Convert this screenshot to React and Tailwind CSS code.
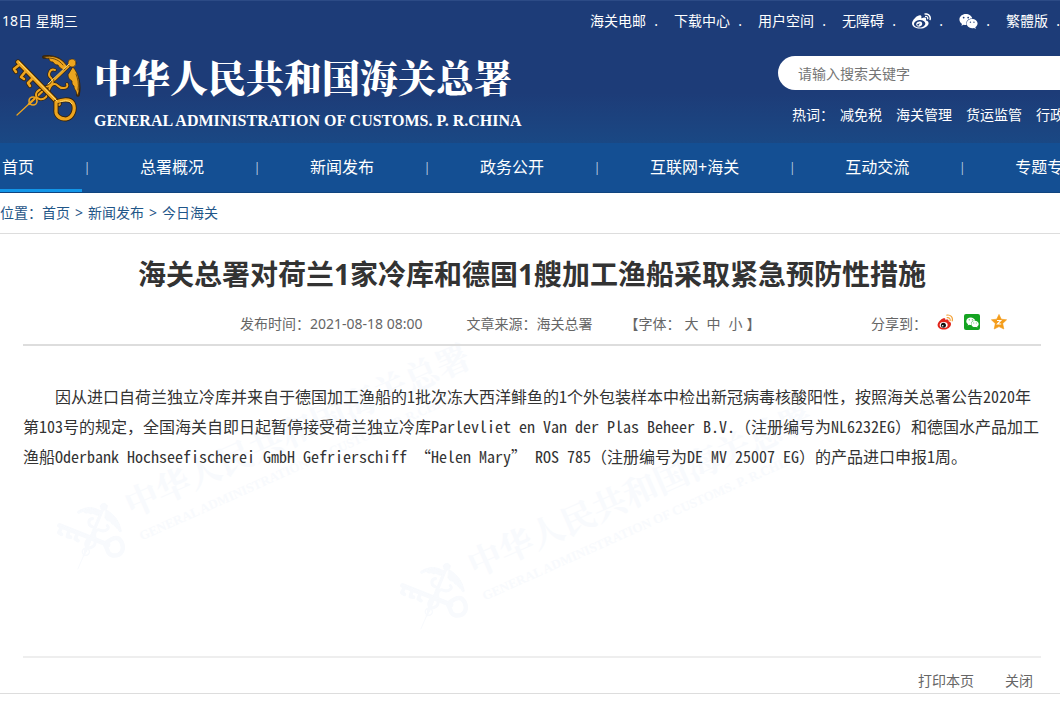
import { FaWeibo, FaWeixin } from "react-icons/fa";

const topLinks = [
  { label: "海关电邮" },
  { label: "下载中心" },
  { label: "用户空间" },
  { label: "无障碍" },
  { label: "微博", icon: FaWeibo },
  { label: "微信", icon: FaWeixin },
  { label: "繁體版" }
];

const hotWords = ["减免税", "海关管理", "货运监管", "行政"];

const menu = ["首页", "总署概况", "新闻发布", "政务公开", "互联网+海关", "互动交流", "专题专"];

const Emblem = ({ className, main, edge, shine }) => (
  <svg viewBox="0 0 72 72" className={className} fill="none" strokeLinecap="round" strokeLinejoin="round" aria-hidden="true">
    {/* Caduceus */}
    <g stroke={edge} strokeWidth="3.6">
      <path d="M23 48L62 11" />
      <path d="M34 5c8-1 16 1 21 9M63 18c5 7 7 15 5 25" />
    </g>
    <path d="M7 63L20 51" stroke={main} strokeWidth="1.2" />
    <path d="M19 52L61 12" stroke={main} strokeWidth="2.4" />
    <path d="M33 5c9-2 18 0 24 9l-3 4c-3-1-5-3-6-5-2 0-4-1-5-3-2 0-4-1-4-3z" fill={main} stroke={edge} strokeWidth=".7" />
    <path d="M63 15c6 7 8 17 5 29-1-2-2-4-2-5-1-1-2-3-2-5-2-1-2-3-2-5-2-1-4-3-4-6z" fill={main} stroke={edge} strokeWidth=".7" />
    <path d="M38 6c6 0 11 2 15 7M66 22c2 5 3 10 2 16" stroke={edge} strokeWidth=".7" />
    <circle cx="62" cy="11" r="4" fill={main} stroke={edge} strokeWidth=".6" />
    <path d="M45 18c-5-2-8 5-4 8 3 3 2 6-2 8-6 2-13 4-13 9 0 4 6 6 10 2 4-5 2-12 8-13 4-1 4 5 10 4 3 0 4-2 3-4" stroke={edge} strokeWidth="3.4" />
    <path d="M45 18c-5-2-8 5-4 8 3 3 2 6-2 8-6 2-13 4-13 9 0 4 6 6 10 2 4-5 2-12 8-13 4-1 4 5 10 4 3 0 4-2 3-4" stroke={main} strokeWidth="2" />
    <circle cx="23" cy="49" r="4" stroke={main} strokeWidth="1.6" />
    {/* Key */}
    <path d="M8 10L49 52" stroke={edge} strokeWidth="5.4" />
    <path d="M9 13L4 17l2 3M15 20l-4 5 3 2M22 27l-4 4 2 3" stroke={edge} strokeWidth="4.2" />
    <path d="M9 13L4 17l2 3M15 20l-4 5 3 2M22 27l-4 4 2 3" stroke={main} strokeWidth="2.6" />
    <path d="M8 10L49 52" stroke={main} strokeWidth="3.8" />
    <path d="M46 50c5-2 14-4 17 1 3 6 0 15-7 16-7 0-11-4-10-10z" stroke={edge} strokeWidth="5" />
    <path d="M46 50c5-2 14-4 17 1 3 6 0 15-7 16-7 0-11-4-10-10z" stroke={main} strokeWidth="3.2" />
    <path d="M9 10L47 49M50 50c5-2 10-2 12 2M59 12L38 32" stroke={shine} strokeWidth="1" />
  </svg>
);

const Watermark = ({ className }) => (
  <div aria-hidden="true" className={`pointer-events-none absolute flex -rotate-24 items-center gap-3 whitespace-nowrap text-[#f8fafd] ${className}`}>
    <Emblem className="size-16 shrink-0" main="#f8fafd" edge="#f8fafd" shine="#f8fafd" />
    <div className="font-['Liberation_Serif','Noto_Serif_CJK_SC','Noto_Sans_CJK_SC',serif] font-bold">
      <p className="text-[34px] leading-10">中华人民共和国海关总署</p>
      <p className="text-[13px] leading-6">GENERAL ADMINISTRATION OF CUSTOMS. P. R.CHINA</p>
    </div>
  </div>
);

const WeiboColor = () => (
  <svg viewBox="0 0 16 16" className="size-4" aria-hidden="true">
    <path d="M6.4 4.3c1.4-.5 2.3.1 1.9 1.6 2-.8 3.8-.4 3.3 1.3 1.5.4 2.4 1.3 2.4 2.7 0 3-3.4 5.6-7.3 5.6C3 15.5.6 13.5.6 11c0-2.4 3.2-5.8 5.8-6.7z" fill="#e1251b" />
    <ellipse cx="6.7" cy="11" rx="4" ry="2.9" fill="#fff" />
    <circle cx="6.4" cy="11.2" r="2.5" fill="#111" />
    <circle cx="5.7" cy="11.8" r=".8" fill="#fff" />
    <path d="M10.2 3.6c2-.3 3.4 1.2 2.9 3.1M9.9 1.1c3.6-.6 6.3 2.3 5.3 5.8" fill="none" stroke="#f3a33a" strokeWidth="1.2" strokeLinecap="round" />
  </svg>
);

const WechatColor = () => (
  <span className="flex size-4 items-center justify-center rounded-xs bg-[#14a321] text-white">
    <FaWeixin size={13} />
  </span>
);

const QzoneColor = () => (
  <svg viewBox="0 0 16 16" className="size-4" aria-hidden="true">
    <path d="M8 .4l2.3 4.8 5.3.6-3.9 3.7 1.1 5.5L8 12.6l-4.8 2.4 1.1-5.5L.4 5.800l5.300-.6z" fill="#f49c1a" stroke="#f49c1a" strokeWidth=".6" strokeLinejoin="round" />
    <path d="M6 6.5h3.8L6.4 10h3.8" fill="none" stroke="#fff" strokeWidth="1.1" />
  </svg>
);

const shares = [
  { label: "分享到微博", icon: WeiboColor },
  { label: "分享到微信", icon: WechatColor },
  { label: "分享到QQ空间", icon: QzoneColor }
];

const App = () => {
  return (
    <div lang="zh-CN" className="min-h-screen overflow-hidden bg-white font-['Noto_Sans','Noto_Sans_CJK_SC',sans-serif] text-sm text-[#666]">
      {/* Header */}
      <header className="border-t border-[#2c4b86] bg-linear-to-b from-[#1d3c78] from-65% to-[#1a4884] text-white">
        <div className="flex h-10 items-center justify-between whitespace-nowrap">
          <p className="pl-0.5">18日 星期三</p>
          <ul className="flex items-center gap-4">
            {topLinks.map((link) => (
              <li key={link.label} className="flex items-center">
                <a href="#" aria-label={link.label} className="block">
                  {link.icon ? <link.icon size={19} /> : link.label}
                </a>
                <span className="w-3 text-right">.</span>
              </li>
            ))}
          </ul>
        </div>

        <div className="flex items-start justify-between">
          <a href="#" className="flex items-start gap-3 whitespace-nowrap pt-[11px] pb-[7px] pl-2.5">
            <Emblem className="size-[72px] shrink-0" main="#eda51f" edge="#3a2408" shine="#ffe07a" />
            <div className="font-['Liberation_Serif','Noto_Serif_CJK_SC','Noto_Sans_CJK_SC',serif] font-bold">
              <p className="text-[38px] leading-[54px] font-black">中华人民共和国海关总署</p>
              <p className="text-base leading-[30px]">GENERAL ADMINISTRATION OF CUSTOMS. P. R.CHINA</p>
            </div>
          </a>
          <div className="w-[282px] shrink-0 pt-[15px]">
            <input
              type="search"
              aria-label="搜索"
              placeholder="请输入搜索关键字"
              className="h-[34px] w-full rounded-l-full bg-white pl-5 text-sm text-gray-800 placeholder:text-[#757575]"
            />
            <div className="mt-[15px] flex whitespace-nowrap pl-3.5">
              <span className="w-12 shrink-0">热词：</span>
              <div className="flex gap-3.5">
                {hotWords.map((word) => (
                  <a key={word} href="#">{word}</a>
                ))}
              </div>
            </div>
          </div>
        </div>
      </header>

      {/* Main menu */}
      <nav className="border-b border-[#10447f] bg-[#144f93] text-base text-white">
        <ul className="flex whitespace-nowrap">
          {menu.map((item, i) => (
            <li key={item} className="flex">
              {i > 0 && <span className="w-2.5 text-center text-xs leading-[49px] text-white/70">|</span>}
              <a
                href="#"
                className={`block h-[49px] leading-12 ${i === 0 ? "border-b-3 border-[#1296e8] pl-0.5 pr-12" : "px-12"}`}
              >
                {item}
              </a>
            </li>
          ))}
        </ul>
      </nav>

      {/* Breadcrumb */}
      <div className="flex h-[41px] items-center gap-[5px] border-b border-[#ddd] text-[#1f5688]">
        <span>位置：<a href="#">首页</a></span>
        <span>&gt;</span>
        <a href="#">新闻发布</a>
        <span>&gt;</span>
        <a href="#">今日海关</a>
      </div>

      {/* Article */}
      <main className="border-b border-[#ddd] pl-[23px] pr-[19px]">
        <article className="relative isolate border-b-2 border-[#eee]">
          <Watermark className="top-48 left-5 -z-10" />
          <Watermark className="top-[252px] left-[363px] -z-10" />

          <h1 className="pt-5 text-center text-[28px] leading-10 font-bold text-[#333]">
            海关总署对荷兰1家冷库和德国1艘加工渔船采取紧急预防性措施
          </h1>

          <div className="flex items-center gap-8 border-b-2 border-[#ddd] pt-5 pb-2.5 pl-[217px] pr-[34px] whitespace-nowrap">
            <span className="pr-3">发布时间：2021-08-18 08:00</span>
            <span>文章来源：海关总署</span>
            <div className="flex">
              <span>【字体：</span>
              <div className="flex gap-2 px-1">
                <button type="button">大</button>
                <button type="button">中</button>
                <button type="button">小</button>
              </div>
              <span>】</span>
            </div>
            <div className="ml-auto flex items-center gap-2.5">
              <span>分享到：</span>
              <div className="flex gap-[11px] pb-1">
                {shares.map((share) => (
                  <a key={share.label} href="#" aria-label={share.label}>
                    <share.icon />
                  </a>
                ))}
              </div>
            </div>
          </div>

          <p className="min-h-[310px] pt-[35px] indent-8 font-['Noto_Sans_Mono_CJK_SC','Noto_Sans_CJK_SC',sans-serif] text-base leading-[30px] text-[#333] [text-spacing-trim:space-all]">
            因从进口自荷兰独立冷库并来自于德国加工渔船的1批次冻大西洋鲱鱼的1个外包装样本中检出新冠病毒核酸阳性，按照海关总署公告2020年第103号的规定，全国海关自即日起暂停接受荷兰独立冷库Parlevliet en Van der Plas Beheer B.V.（注册编号为NL6232EG）和德国水产品加工渔船Oderbank Hochseefischerei GmbH Gefrierschiff “Helen Mary” ROS 785（注册编号为DE MV 25007 EG）的产品进口申报1周。
          </p>
        </article>

        <div className="flex h-[35px] items-end justify-end gap-[31px] pr-2">
          <button type="button" className="leading-6">打印本页</button>
          <button type="button" className="leading-6">关闭</button>
        </div>
      </main>
    </div>
  );
};

export default App;
